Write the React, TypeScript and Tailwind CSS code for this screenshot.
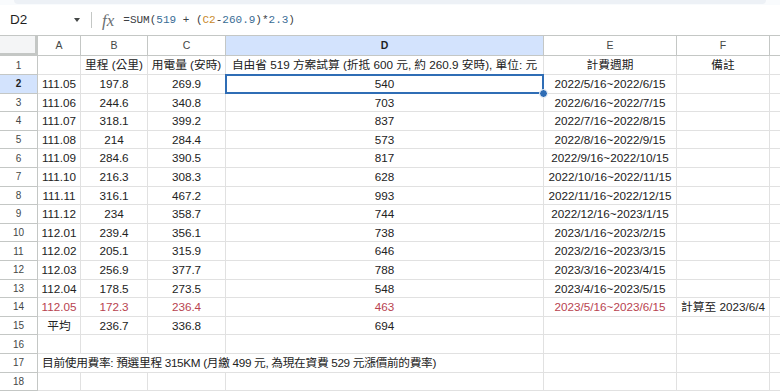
import React from "react";

const COLS = [
  { key: "A", w: "w-[43px]" },
  { key: "B", w: "w-[67px]" },
  { key: "C", w: "w-[78px]" },
  { key: "D", w: "w-[318px]" },
  { key: "E", w: "w-[133px]" },
  { key: "F", w: "w-[93px]" },
];

type Row = string[];

const data: Row[] = [
  ["", "里程 (公里)", "用電量 (安時)", "自由省 519 方案試算 (折抵 600 元, 約 260.9 安時), 單位: 元", "計費週期", "備註"],
  ["111.05", "197.8", "269.9", "540", "2022/5/16~2022/6/15", ""],
  ["111.06", "244.6", "340.8", "703", "2022/6/16~2022/7/15", ""],
  ["111.07", "318.1", "399.2", "837", "2022/7/16~2022/8/15", ""],
  ["111.08", "214", "284.4", "573", "2022/8/16~2022/9/15", ""],
  ["111.09", "284.6", "390.5", "817", "2022/9/16~2022/10/15", ""],
  ["111.10", "216.3", "308.3", "628", "2022/10/16~2022/11/15", ""],
  ["111.11", "316.1", "467.2", "993", "2022/11/16~2022/12/15", ""],
  ["111.12", "234", "358.7", "744", "2022/12/16~2023/1/15", ""],
  ["112.01", "239.4", "356.1", "738", "2023/1/16~2023/2/15", ""],
  ["112.02", "205.1", "315.9", "646", "2023/2/16~2023/3/15", ""],
  ["112.03", "256.9", "377.7", "788", "2023/3/16~2023/4/15", ""],
  ["112.04", "178.5", "273.5", "548", "2023/4/16~2023/5/15", ""],
  ["112.05", "172.3", "236.4", "463", "2023/5/16~2023/6/15", "計算至 2023/6/4"],
  ["平均", "236.7", "336.8", "694", "", ""],
  ["", "", "", "", "", ""],
  ["", "", "", "", "", ""],
  ["", "", "", "", "", ""],
];

const NOTE = "目前使用費率: 預選里程 315KM (月繳 499 元, 為現在資費 529 元漲價前的費率)";

function FormulaBar() {
  return (
    <div className="flex h-[30px] items-center bg-white">
      <span className="ml-[10px] w-[64px] text-[13.5px] text-[#1f1f1f]">D2</span>
      <span className="h-0 w-0 border-x-[3.5px] border-t-[4px] border-x-transparent border-t-[#444746]" />
      <span className="ml-[11px] h-[16px] w-px bg-[#c4c7c5]" />
      <span className="ml-[10px] font-['Liberation_Serif',serif] text-[17px] italic leading-none text-[#6b6f73]">
        fx
      </span>
      <span className="ml-[9px] font-['Liberation_Mono',monospace] text-[11px] text-[#3c4043]">
        =SUM(<span className="text-[#3a6d95]">519</span> + (<span className="text-[#c98a2c]">C2</span>-
        <span className="text-[#3a6d95]">260.9</span>)*<span className="text-[#3a6d95]">2.3</span>)
      </span>
    </div>
  );
}

function HeaderRow() {
  return (
    <div className="flex h-[21px] border-t border-[#c4c7c5]">
      <div className="w-[38px] shrink-0 border-b-[3px] border-r-[3px] border-[#c4c7c5] bg-[#f4f5f6]" />
      {COLS.map((c) => (
        <div
          key={c.key}
          className={`${c.w} flex shrink-0 items-center justify-center border-b border-r border-[#c4c7c5] text-[10.5px] ${
            c.key === "D" ? "bg-[#d3e3fd] font-bold text-[#1f1f1f]" : "bg-white text-[#444746]"
          }`}
        >
          {c.key}
        </div>
      ))}
      <div className="flex-1 border-b border-[#c4c7c5] bg-white" />
    </div>
  );
}

function DataRow({ row, idx }: { row: Row; idx: number }) {
  const n = idx + 1;
  const red = n === 14;
  const h = n === 1 ? "h-[19px]" : "h-[18.6px]";
  const selectedRow = n === 2;
  return (
    <div className={`flex ${h}`}>
      <div
        className={`flex w-[38px] shrink-0 items-center justify-center border-b border-r border-[#c4c7c5] text-[10px] ${
          selectedRow ? "bg-[#d3e3fd] font-bold text-[#1f1f1f]" : "bg-white text-[#444746]"
        }`}
      >
        {n}
      </div>
      {n === 17 ? (
        <>
          <div className="flex w-[506px] shrink-0 items-center whitespace-nowrap border-b border-r border-[#e1e1e1] pl-[4px] text-[11.7px] tracking-[-0.3px] text-[#222]">
            {NOTE}
          </div>
          <div className="w-[133px] shrink-0 border-b border-r border-[#e1e1e1]" />
          <div className="w-[93px] shrink-0 border-b border-r border-[#e1e1e1]" />
        </>
      ) : (
        COLS.map((c, i) => {
          const isD2 = n === 2 && c.key === "D";
          const color = red && c.key !== "F" ? "text-[#b8434f]" : "text-[#222]";
          return (
            <div
              key={c.key}
              className={`${c.w} relative flex shrink-0 items-center justify-center whitespace-nowrap border-b border-r border-[#e1e1e1] text-[11.7px] ${color} ${
                isD2 ? "z-10" : ""
              }`}
            >
              {row[i]}
              {isD2 && (
                <>
                  <div className="absolute -left-px -top-px bottom-[-1px] right-[-1px] border-2 border-[#2f6db5]" />
                  <div className="absolute bottom-[-5px] right-[-5px] h-[9px] w-[9px] rounded-full border border-white bg-[#2f6db5]" />
                </>
              )}
            </div>
          );
        })
      )}
      <div className="flex-1 border-b border-[#e1e1e1]" />
    </div>
  );
}

export default function App() {
  return (
    <div className="h-[391px] w-[780px] overflow-hidden bg-white font-['Liberation_Sans','Noto_Sans_CJK_TC',sans-serif]">
      <div className="h-[5px] bg-[#f9fbfd] px-[14px]">
        <div className="h-[4px] rounded-b-[6px] bg-[#edf1f6]" />
      </div>
      <FormulaBar />
      <HeaderRow />
      {data.map((row, i) => (
        <DataRow key={i} row={row} idx={i} />
      ))}
    </div>
  );
}
